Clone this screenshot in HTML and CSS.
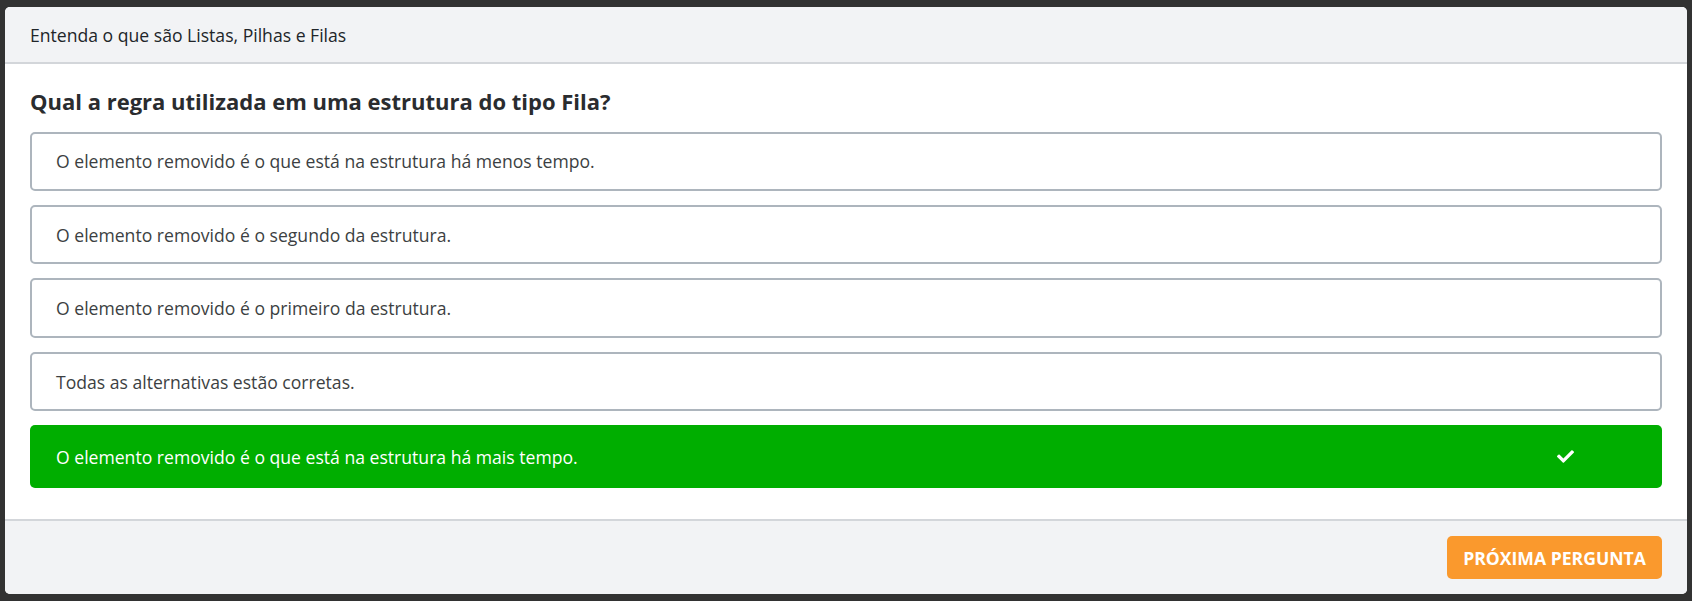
FILE: index.html
```html
<!DOCTYPE html>
<html lang="pt-BR">
<head>
<meta charset="utf-8">
<title>Quiz</title>
<link rel="stylesheet" href="styles.css">
</head>
<body>
<div class="modal">
  <div class="modal-header">Entenda o que são Listas, Pilhas e Filas</div>
  <div class="modal-body">
    <h5 class="question">Qual a regra utilizada em uma estrutura do tipo Fila?</h5>
    <div class="options">
      <div class="option">O elemento removido é o que está na estrutura há menos tempo.</div>
      <div class="option">O elemento removido é o segundo da estrutura.</div>
      <div class="option">O elemento removido é o primeiro da estrutura.</div>
      <div class="option">Todas as alternativas estão corretas.</div>
      <div class="option option-correct">
        <span>O elemento removido é o que está na estrutura há mais tempo.</span>
        <svg class="check" viewBox="0 65 512 382" width="17" height="13" aria-hidden="true"><path fill="#fff" d="M173.898 439.404l-166.4-166.4c-9.997-9.997-9.997-26.206 0-36.204l36.203-36.204c9.997-9.998 26.207-9.998 36.204 0L192 312.69 432.095 72.596c9.997-9.997 26.207-9.997 36.204 0l36.203 36.204c9.997 9.997 9.997 26.206 0 36.204l-294.4 294.401c-9.998 9.997-26.207 9.997-36.204-.001z"/></svg>
      </div>
    </div>
  </div>
  <div class="modal-footer">
    <button class="btn-next" type="button">PRÓXIMA PERGUNTA</button>
  </div>
</div>
</body>
</html>
```
FILE: styles.css
```css
* { box-sizing: border-box; }

html, body { height: 100%; }

body {
  margin: 0;
  padding: 7px 5px;
  background: #323232;
  font-family: "Open Sans", "Noto Sans", Arial, sans-serif;
  color: #212529;
}

.modal {
  background: #fff;
  border-radius: 5px;
  overflow: hidden;
}

.modal-header {
  height: 57px;
  background: #f2f3f5;
  border-bottom: 2px solid #d3d6da;
  padding: 0 25px;
  display: flex;
  align-items: center;
  font-size: 17.6px;
  color: #212529;
}

.modal-body {
  padding: 24.3px 25px 31.5px;
}

.question {
  margin: 0 0 17px;
  font-size: 22px;
  line-height: 26.4px;
  font-weight: 700;
  color: #2a2c2f;
}

.options {
  display: flex;
  flex-direction: column;
  gap: 14px;
}

.option {
  height: 59.4px;
  border: 2px solid #adb5bd;
  border-radius: 5px;
  padding: 0 24px;
  display: flex;
  align-items: center;
  font-size: 17.6px;
  color: #3c3f42;
}

.option-correct {
  height: 62.5px;
  border: none;
  background: #00ae00;
  color: #fff;
  padding: 0 88px 0 26px;
  justify-content: space-between;
}

.check {
  display: block;
  flex: none;
}

.modal-footer {
  background: #f2f3f5;
  border-top: 2px solid #d3d6da;
  padding: 15px 25px 15px;
  display: flex;
  justify-content: flex-end;
}

.btn-next {
  height: 43px;
  width: 215px;
  border: none;
  border-radius: 5px;
  background: #fa992d;
  color: #fff;
  font-family: "Open Sans", "Noto Sans", Arial, sans-serif;
  font-size: 17.6px;
  font-weight: 700;
  padding: 0;
  cursor: pointer;
}
```
